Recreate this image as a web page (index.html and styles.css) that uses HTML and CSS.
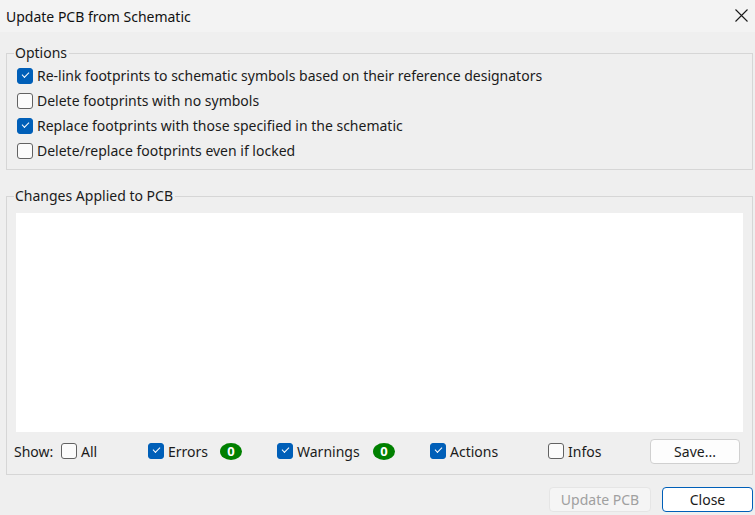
FILE: index.html
```html
<!DOCTYPE html>
<html>
<head>
<meta charset="utf-8">
<link rel="stylesheet" href="styles.css">
</head>
<body>
<div class="titlebar">
  <span class="title">Update PCB from Schematic</span>
  <svg class="close-x" width="13" height="13" viewBox="0 0 13 13"><path d="M0.5 0.5 L12.5 12.5 M12.5 0.5 L0.5 12.5" stroke="#1a1a1a" stroke-width="1.1" fill="none"/></svg>
</div>
<div class="dialog">
  <fieldset class="group options">
    <legend>Options</legend>
    <label class="row"><span class="cb checked"></span><span>Re-link footprints to schematic symbols based on their reference designators</span></label>
    <label class="row"><span class="cb"></span><span>Delete footprints with no symbols</span></label>
    <label class="row"><span class="cb checked"></span><span>Replace footprints with those specified in the schematic</span></label>
    <label class="row"><span class="cb"></span><span>Delete/replace footprints even if locked</span></label>
  </fieldset>
  <fieldset class="group changes">
    <legend>Changes Applied to PCB</legend>
    <div class="log"></div>
    <div class="showbar">
      <span class="show-label">Show:</span>
      <span class="item w-all"><span class="cb"></span>All</span>
      <span class="item w-err"><span class="cb checked"></span>Errors</span>
      <span class="badge">0</span>
      <span class="item w-warn"><span class="cb checked"></span>Warnings</span>
      <span class="badge">0</span>
      <span class="item w-act"><span class="cb checked"></span>Actions</span>
      <span class="item w-info"><span class="cb"></span>Infos</span>
      <button class="btn save">Save...</button>
    </div>
  </fieldset>
  <div class="footer">
    <button class="btn disabled">Update PCB</button>
    <button class="btn primary">Close</button>
  </div>
</div>
</body>
</html>
```
FILE: styles.css
```css
html, body {
  margin: 0;
  padding: 0;
  background: #efefef;
  font-family: "Noto Sans", "Open Sans", sans-serif;
  font-size: 14px;
  color: #1b1b1b;
}
.titlebar {
  height: 32px;
  background: #f3f3f3;
  display: flex;
  align-items: center;
  justify-content: space-between;
  padding: 0 7px 0 6px;
}
.title {
  font-size: 14px;
  color: #111;
}
.close-x {
  margin-top: -1px;
}
.dialog {
  padding: 0 2px 0 6px;
}
.group {
  margin: 0;
  padding: 0;
  border: 1px solid #d6d6d6;
  min-width: 0;
}
.group legend {
  margin-left: 7px;
  padding: 0 2px 0 1px;
  line-height: 20px;
  height: 20px;
}
.options {
  margin-top: 11px;
  padding: 0 0 6px 0;
}
.row {
  display: flex;
  align-items: center;
  height: 25px;
  gap: 4px;
  padding-left: 10px;
}
.cb {
  box-sizing: border-box;
  width: 16px;
  height: 16px;
  border: 1px solid #626262;
  border-radius: 3px;
  background: #fbfbfb;
  flex: none;
  position: relative;
}
.cb.checked {
  background: #005fb8;
  border-color: #005fb8;
}
.cb.checked::after {
  content: "";
  position: absolute;
  left: 4px;
  top: 3px;
  width: 6px;
  height: 3px;
  border-left: 1px solid #fff;
  border-bottom: 1px solid #fff;
  transform: rotate(-45deg);
}
.changes {
  margin-top: 16px;
  padding: 7px 0 10px 0;
}
.log {
  height: 219px;
  background: #fff;
  margin: 0 9px;
}
.showbar {
  display: flex;
  align-items: center;
  height: 26px;
  margin-top: 6px;
  padding-left: 7px;
}
.show-label {
  width: 47px;
}
.item {
  display: flex;
  align-items: center;
  gap: 4px;
}
.w-all { width: 87px; }
.w-err { width: 72px; }
.w-warn { width: 96px; }
.w-act { width: 118px; }
.w-info { width: 102px; }
.badge {
  width: 22px;
  height: 17px;
  border-radius: 50%;
  background: #008000;
  color: #fff;
  font-weight: bold;
  font-size: 13px;
  line-height: 17px;
  text-align: center;
  margin-right: 35px;
}
.btn {
  box-sizing: border-box;
  font-family: inherit;
  font-size: 14px;
  height: 25px;
  border-radius: 4px;
  border: 1px solid #d0d0d0;
  background: #fdfdfd;
  color: #1b1b1b;
  padding: 0;
}
.save {
  width: 90px;
}
.footer {
  display: flex;
  justify-content: flex-end;
  gap: 11px;
  margin-top: 12px;
}
.disabled {
  width: 102px;
  background: #f5f5f5;
  border-color: #e5e5e5;
  color: #a0a0a0;
}
.primary {
  width: 91px;
  background: #fff;
  border-color: #005fb8;
}
```
